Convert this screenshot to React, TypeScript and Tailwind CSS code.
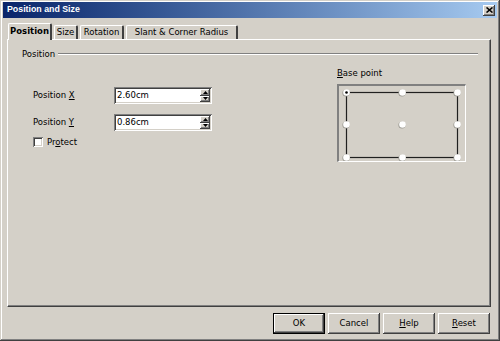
const raised =
  "shadow-[inset_-1px_-1px_#404040,inset_1px_1px_#ffffff,inset_-2px_-2px_#808080,inset_2px_2px_#d4d0c8]";
const sunken =
  "shadow-[inset_1px_1px_#808080,inset_-1px_-1px_#ffffff,inset_2px_2px_#404040,inset_-2px_-2px_#d4d0c8]";

function SpinField({ value }: { value: string }) {
  return (
    <div className={`w-[98px] h-[17px] bg-white flex p-[2px] ${sunken}`}>
      <div className="flex-1 flex items-center pl-[1px] leading-none">{value}</div>
      <div className="w-[10px] flex flex-col">
        <div className={`flex-1 bg-[#d4d0c8] flex items-center justify-center ${raised}`}>
          <svg width="5" height="3" viewBox="0 0 5 3">
            <path d="M2.5 0 L5 3 L0 3 Z" fill="#000" />
          </svg>
        </div>
        <div className={`flex-1 bg-[#d4d0c8] flex items-center justify-center ${raised}`}>
          <svg width="5" height="3" viewBox="0 0 5 3">
            <path d="M0 0 L5 0 L2.5 3 Z" fill="#000" />
          </svg>
        </div>
      </div>
    </div>
  );
}

function Dot({ x, y, on }: { x: number; y: number; on?: boolean }) {
  return (
    <g>
      <circle cx={x - 0.5} cy={y + 0.5} r={3.6} fill="#9a9890" />
      <circle cx={x} cy={y} r={3.3} fill="#ffffff" />
      {on && <circle cx={x} cy={y} r={1.3} fill="#000" />}
    </g>
  );
}

function Button({ children, isDefault }: { children: React.ReactNode; isDefault?: boolean }) {
  return (
    <div
      className={`w-[52px] h-[21px] ${isDefault ? "border border-black" : ""} bg-[#d4d0c8]`}
    >
      <div className={`w-full h-full flex items-center justify-center ${raised}`}>{children}</div>
    </div>
  );
}

export default function App() {
  const xs = [8, 64, 119];
  const ys = [7, 39, 72];
  return (
    <div
      className={`w-[500px] h-[341px] bg-[#d4d0c8] pt-[2px] px-[3px] flex flex-col font-['DejaVu_Sans',sans-serif] text-[8.5px] text-black shadow-[inset_-1px_-1px_#404040,inset_1px_1px_#d4d0c8,inset_-2px_-2px_#808080,inset_2px_2px_#ffffff]`}
    >
      {/* title bar */}
      <div className="h-[16px] bg-gradient-to-r from-[#0a246a] to-[#a6caf0] flex items-center pl-[4px] pr-[2px]">
        <span className="font-['Liberation_Sans',sans-serif] font-bold text-[8.8px] text-white">
          Position and Size
        </span>
        <div
          className={`ml-auto w-[12px] h-[11px] bg-[#d4d0c8] flex items-center justify-center ${raised}`}
        >
          <svg width="7" height="6" viewBox="0 0 7 6">
            <path d="M0.5 0.5 L6.5 5.5 M6.5 0.5 L0.5 5.5" stroke="#000" strokeWidth="1.6" />
          </svg>
        </div>
      </div>

      {/* tabs */}
      <div className="mt-[5px] ml-[5px] h-[16px] flex items-end gap-[2px] relative z-10">
        <div className="w-[44px] h-[17px] -mb-[1px] bg-[#d4d0c8] border-t border-l border-white border-r-2 border-r-[#404040] rounded-t-[2px] flex items-center justify-center font-bold pb-[2px]">
          Position
        </div>
        <div className="w-[24px] h-[14px] border-t border-l border-white border-r-2 border-r-[#404040] rounded-t-[2px] flex items-center justify-center">
          Size
        </div>
        <div className="w-[44px] h-[14px] border-t border-l border-white border-r-2 border-r-[#404040] rounded-t-[2px] flex items-center justify-center">
          Rotation
        </div>
        <div className="w-[112px] h-[14px] border-t border-l border-white border-r-2 border-r-[#404040] rounded-t-[2px] flex items-center justify-center">
          Slant &amp; Corner Radius
        </div>
      </div>

      {/* panel */}
      <div className="ml-[4px] mr-[6px] h-[268px] border-t border-l border-white border-b border-r border-b-[#404040] border-r-[#404040] shadow-[inset_-1px_-1px_#808080] pt-[8px] pl-[14px] pr-[12px]">
        <div className="h-[12px] flex items-center">
          <span>Position</span>
          <div className="flex-1 ml-[3px] h-[2px] border-t border-[#808080] border-b border-b-white" />
        </div>

        <div className="flex items-start">
          <div className="pl-[11px] mt-[27px] flex flex-col gap-[10px]">
            <div className="flex items-center">
              <span className="w-[81px]">
                Position <span className="underline">X</span>
              </span>
              <SpinField value="2.60cm" />
            </div>
            <div className="flex items-center">
              <span className="w-[81px]">
                Position <span className="underline">Y</span>
              </span>
              <SpinField value="0.86cm" />
            </div>
            <div className="flex items-center gap-[4px] -mt-[5px]">
              <div className={`w-[10px] h-[10px] bg-white ${sunken}`} />
              <span>
                Pr<span className="underline">o</span>tect
              </span>
            </div>
          </div>

          <div className="ml-[125px] mt-[8px] flex flex-col">
            <span className="h-[10px] leading-[10px]">
              <span className="underline">B</span>ase point
            </span>
            <div className="mt-[6px] w-[129px] h-[78px] border-t-2 border-l-2 border-[#808080] border-b border-r border-b-white border-r-white">
              <svg width="126" height="75" viewBox="0 0 126 75">
                <rect x={7.5} y={6.5} width={111} height={65} fill="none" stroke="#202020" strokeWidth={1.2} />
                {ys.map((y) =>
                  xs.map((x) => (
                    <Dot key={`${x}-${y}`} x={x - 0.5} y={y - 0.5} on={x === 8 && y === 7} />
                  ))
                )}
              </svg>
            </div>
          </div>
        </div>
      </div>

      {/* buttons */}
      <div className="mt-[6px] mr-[7px] flex justify-end gap-[3px]">
        <Button isDefault>OK</Button>
        <Button>Cancel</Button>
        <Button>
          <span>
            <span className="underline">H</span>elp
          </span>
        </Button>
        <Button>
          <span>
            <span className="underline">R</span>eset
          </span>
        </Button>
      </div>
    </div>
  );
}
